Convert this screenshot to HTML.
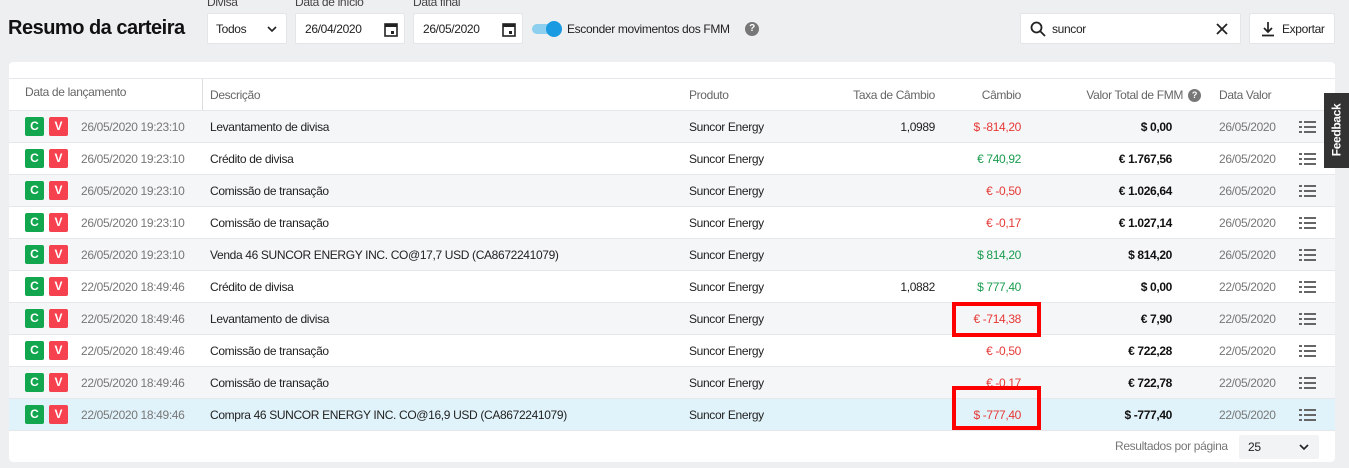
<!DOCTYPE html>
<html><head><meta charset="utf-8"><style>
*{box-sizing:border-box;margin:0;padding:0}
body{width:1349px;height:468px;background:#eeeff1;font-family:"Liberation Sans",sans-serif;font-size:12px;color:#222;position:relative;overflow:hidden;letter-spacing:-0.35px}
.abs{position:absolute}
.box{position:absolute;background:#fff;border:1px solid #e4e5e8;border-radius:2px;height:31px;top:13px}
.lbl{position:absolute;top:-5px;font-size:12px;color:#444}
.card{position:absolute;left:9px;top:62px;width:1326px;height:400px;background:#fff;border-radius:4px}
.row{position:absolute;left:9px;width:1326px;height:32px;border-top:1px solid #e6e7ea}
.row span{position:absolute;top:9px;white-space:nowrap}
.c{position:absolute;top:6px;width:19px;height:19px;color:#fff;font-weight:bold;font-size:12px;text-align:center;line-height:19px;border-radius:2px;letter-spacing:0}
.g{color:#1a9c4f}.r{color:#e53935}.b{font-weight:bold;color:#111}.gr{color:#777}
.hd{position:absolute;top:88px;color:#666;font-size:12px}
</style></head><body>
<div class="abs" style="left:8px;top:17px;font-size:20px;font-weight:bold;color:#111;letter-spacing:-0.5px">Resumo da carteira</div>
<div class="box" style="left:207px;width:80px"><span class="abs" style="left:8px;top:8px;color:#222">Todos</span><svg class="abs" style="left:59px;top:11px" width="10" height="8" viewBox="0 0 10 8"><path d="M1 2l4 4 4-4" stroke="#222" stroke-width="1.6" fill="none"/></svg></div>
<div class="lbl" style="left:207px">Divisa</div>
<div class="box" style="left:295px;width:110px"><span class="abs" style="left:9px;top:8px">26/04/2020</span><svg class="abs" style="left:88px;top:8px" width="14" height="15" viewBox="0 0 14 15"><rect x="1" y="2" width="12" height="12" fill="none" stroke="#222" stroke-width="1.6"/><rect x="1" y="2" width="12" height="3" fill="#222"/><rect x="7" y="9" width="3" height="3" fill="#222"/></svg></div>
<div class="lbl" style="left:295px">Data de início</div>
<div class="box" style="left:413px;width:110px"><span class="abs" style="left:9px;top:8px">26/05/2020</span><svg class="abs" style="left:88px;top:8px" width="14" height="15" viewBox="0 0 14 15"><rect x="1" y="2" width="12" height="12" fill="none" stroke="#222" stroke-width="1.6"/><rect x="1" y="2" width="12" height="3" fill="#222"/><rect x="7" y="9" width="3" height="3" fill="#222"/></svg></div>
<div class="lbl" style="left:413px">Data final</div>
<div class="abs" style="left:532px;top:24px;width:28px;height:10px;border-radius:5px;background:#8ccfee"></div>
<div class="abs" style="left:546px;top:21px;width:16px;height:16px;border-radius:8px;background:#1a9ae0"></div>
<div class="abs" style="left:567px;top:22px">Esconder movimentos dos FMM</div>
<div class="abs" style="left:745px;top:22px;width:14px;height:14px;border-radius:7px;background:#777;color:#fff;font-size:10px;font-weight:bold;text-align:center;line-height:14px">?</div>
<div class="box" style="left:1020px;width:221px"><svg class="abs" style="left:9px;top:7px" width="16" height="16" viewBox="0 0 16 16"><circle cx="6.5" cy="6.5" r="5" stroke="#222" stroke-width="1.8" fill="none"/><path d="M10 10l5 5" stroke="#222" stroke-width="1.8"/></svg><span class="abs" style="left:31px;top:8px">suncor</span><svg class="abs" style="left:195px;top:9px" width="12" height="12" viewBox="0 0 12 12"><path d="M1 1l10 10M11 1L1 11" stroke="#222" stroke-width="1.8"/></svg></div>
<div class="box" style="left:1249px;width:86px"><svg class="abs" style="left:10px;top:7px" width="16" height="16" viewBox="0 0 16 16"><path d="M8 1v10M4 7l4 4 4-4M2 14.5h12" stroke="#222" stroke-width="1.7" fill="none"/></svg><span class="abs" style="left:32px;top:8px">Exportar</span></div>
<div class="card"></div>
<div class="abs" style="left:9px;top:78px;width:1326px;border-top:1px solid #e6e7ea"></div>
<div class="abs" style="left:202px;top:79px;width:1px;height:351px;background:#ddd"></div>
<div class="hd" style="left:25px;top:85px">Data de lançamento</div>
<div class="hd" style="left:210px">Descrição</div>
<div class="hd" style="left:689px">Produto</div>
<div class="hd" style="left:835px;width:100px;text-align:right">Taxa de Câmbio</div>
<div class="hd" style="left:921px;width:100px;text-align:right">Câmbio</div>
<div class="hd" style="left:1040px;width:143px;text-align:right">Valor Total de FMM</div>
<div class="abs" style="left:1188px;top:89px;width:13px;height:13px;border-radius:7px;background:#777;color:#fff;font-size:9px;font-weight:bold;text-align:center;line-height:13px">?</div>
<div class="hd" style="left:1219px">Data Valor</div>
<div id="rows"></div>
<div class="abs" style="left:9px;top:430px;width:1326px;border-top:1px solid #e6e7ea"></div>
<div class="abs" style="left:1115px;top:439px;color:#777">Resultados por página</div>
<div class="abs" style="left:1239px;top:435px;width:80px;height:24px;background:#f2f3f5;border-radius:2px"><span class="abs" style="left:9px;top:5px">25</span><svg class="abs" style="left:60px;top:8px" width="10" height="8" viewBox="0 0 10 8"><path d="M1 2l4 4 4-4" stroke="#222" stroke-width="1.6" fill="none"/></svg></div>
<div class="abs" style="left:1324px;top:93px;width:25px;height:75px;background:#333"><div style="position:absolute;left:-20px;top:30px;width:65px;transform:rotate(-90deg);color:#fff;font-weight:bold;font-size:12px;text-align:center">Feedback</div></div>
<div class="abs" style="left:952px;top:302px;width:89px;height:35px;border:4px solid #f00"></div>
<div class="abs" style="left:952px;top:386px;width:89px;height:44px;border:4px solid #f00"></div>
<script>
var d=[["26/05/2020 19:23:10","Levantamento de divisa","1,0989","$ -814,20","r","$ 0,00","26/05/2020"],
["26/05/2020 19:23:10","Crédito de divisa","","€ 740,92","g","€ 1.767,56","26/05/2020"],
["26/05/2020 19:23:10","Comissão de transação","","€ -0,50","r","€ 1.026,64","26/05/2020"],
["26/05/2020 19:23:10","Comissão de transação","","€ -0,17","r","€ 1.027,14","26/05/2020"],
["26/05/2020 19:23:10","Venda 46 SUNCOR ENERGY INC. CO@17,7 USD (CA8672241079)","","$ 814,20","g","$ 814,20","26/05/2020"],
["22/05/2020 18:49:46","Crédito de divisa","1,0882","$ 777,40","g","$ 0,00","22/05/2020"],
["22/05/2020 18:49:46","Levantamento de divisa","","€ -714,38","r","€ 7,90","22/05/2020"],
["22/05/2020 18:49:46","Comissão de transação","","€ -0,50","r","€ 722,28","22/05/2020"],
["22/05/2020 18:49:46","Comissão de transação","","€ -0,17","r","€ 722,78","22/05/2020"],
["22/05/2020 18:49:46","Compra 46 SUNCOR ENERGY INC. CO@16,9 USD (CA8672241079)","","$ -777,40","r","$ -777,40","22/05/2020"]];
var h="";
var ic='<svg style="position:absolute;left:1290px;top:9px" width="17" height="15" viewBox="0 0 17 15"><g fill="#666"><rect x="0" y="1" width="3" height="2"/><rect x="5" y="1" width="12" height="2"/><rect x="0" y="6" width="3" height="2"/><rect x="5" y="6" width="12" height="2"/><rect x="0" y="11" width="3" height="2"/><rect x="5" y="11" width="12" height="2"/></g></svg>';
d.forEach(function(r,i){var bg=i==9?"#e1f3fa":(i%2==0?"#f5f6f8":"#fff");
h+='<div class="row" style="top:'+(110+i*32)+'px;background:'+bg+'"><div class="c" style="left:16px;background:#12a64f">C</div><div class="c" style="left:40px;background:#f5424e">V</div><span class="gr" style="left:72px">'+r[0]+'</span><span style="left:201px">'+r[1]+'</span><span style="left:680px">Suncor Energy</span><span style="left:826px;width:100px;text-align:right">'+r[2]+'</span><span class="'+r[4]+'" style="left:912px;width:100px;text-align:right">'+r[3]+'</span><span class="b" style="left:1063px;width:100px;text-align:right">'+r[5]+'</span><span class="gr" style="left:1210px">'+r[6]+'</span>'+ic+'</div>';});
document.getElementById("rows").innerHTML=h;
</script>
</body></html>
